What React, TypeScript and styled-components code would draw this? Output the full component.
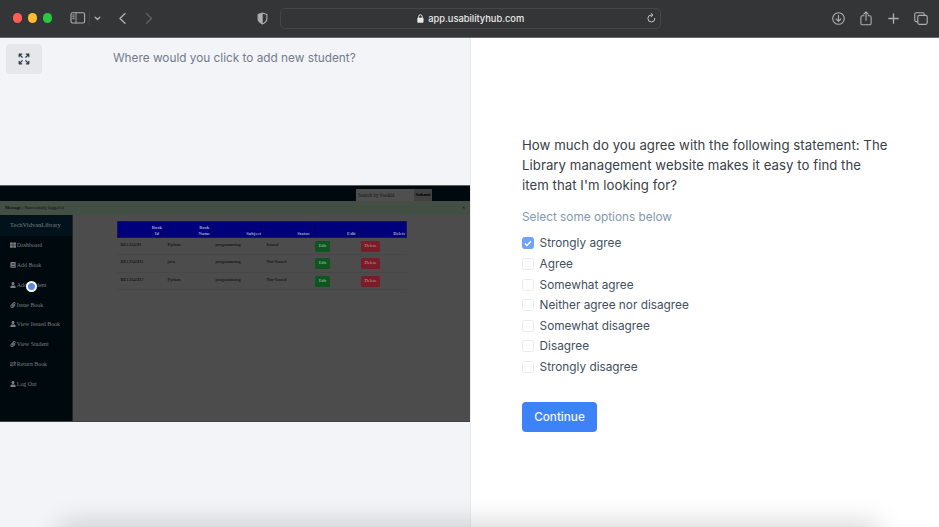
import React from "react";
import styled, { createGlobalStyle, css } from "styled-components";
import { FaBook, FaPaperclip, FaThLarge, FaUser } from "react-icons/fa";

const GlobalStyle = createGlobalStyle`
  * { box-sizing: border-box; }
  body { margin: 0; overflow: hidden; background: #fff; font-family: Inter, "Liberation Sans", sans-serif; }
`;

const Window = styled.div`
  position: relative;
  display: flex;
  flex-direction: column;
  width: 939px;
  height: 527px;
  overflow: hidden;
`;

const BrowserBar = styled.header`
  display: flex;
  align-items: center;
  flex: none;
  height: 38px;
  padding: 0 11px 1px 13px;
  background: #343536;
  border-bottom: 1px solid #646566;
  color: #adaeaf;
  svg { display: block; flex: none; }
`;

const Lights = styled.div`
  display: flex;
  gap: 5.6px;
  margin-right: 18px;
`;

const Light = styled.i<{ $color: string }>`
  width: 9.2px;
  height: 9.2px;
  border-radius: 50%;
  background: ${(p) => p.$color};
`;

const Tools = styled.div`
  display: flex;
  align-items: center;
  width: 200px;
  padding-right: 2px;
`;

const Divider = styled.i`
  width: 1px;
  height: 13px;
  margin: 0 4px 0 3px;
  background: #434445;
`;

const Spacer = styled.span`
  flex: 1;
`;

const Address = styled.div`
  display: flex;
  align-items: center;
  justify-content: center;
  width: 381px;
  height: 21px;
  margin-left: 10px;
  padding: 0 4px 0 14px;
  border: 1px solid #454647;
  border-radius: 5px;
  color: #e9e9e9;
  font-size: 9.3px;
  font-weight: 500;
`;

const Host = styled.span`
  flex: 1;
  display: flex;
  align-items: center;
  justify-content: center;
  gap: 4px;
`;

const Actions = styled.div`
  display: flex;
  align-items: center;
  justify-content: space-between;
  width: 96px;
  margin-left: auto;
`;

const Content = styled.main`
  display: flex;
  flex: 1;
`;

const TaskPane = styled.section`
  display: flex;
  flex-direction: column;
  width: 471px;
  background: #f2f4f8;
  border-right: 1px solid #e8eaec;
`;

const TaskHeader = styled.div`
  display: flex;
  height: 147px;
  padding: 6px 6px 0;
`;

const ExpandButton = styled.button`
  display: flex;
  align-items: center;
  justify-content: center;
  width: 36px;
  height: 30px;
  padding: 0;
  border: 0;
  border-radius: 4px;
  background: #e5e7eb;
  color: #2d3e4f;
`;

const TaskText = styled.p`
  margin: 6px 0 0 71px;
  font-size: 11.8px;
  line-height: 17px;
  white-space: nowrap;
  color: #737b8b;
`;

const Shot = styled.div`
  position: relative;
  width: 470px;
  height: 237px;
  background: #4c4c4c;
  border-top: 1px solid #59605f;
  border-bottom: 1px solid #404040;
  font-family: "Liberation Serif", serif;
  overflow: hidden;
`;

const ShotTop = styled.div`
  display: flex;
  justify-content: flex-end;
  height: 15px;
  padding: 3px 38px 0 0;
  background: #00090e;
`;

const SearchField = styled.span`
  width: 58px;
  height: 12px;
  padding-left: 2px;
  background: #4f4f4f;
  color: #151515;
  font-size: 5.2px;
  line-height: 12px;
`;

const SubmitField = styled.span`
  width: 18px;
  height: 12px;
  background: #414141;
  color: #000;
  font-size: 4.8px;
  font-weight: 700;
  line-height: 12px;
  text-align: center;
`;

const Message = styled.div`
  display: flex;
  justify-content: space-between;
  height: 14px;
  padding: 0 5px 0 5px;
  background: #434e45;
  color: #07120b;
  font-size: 4.4px;
  line-height: 13px;
`;

const ShotBody = styled.div`
  display: flex;
  height: 207px;
`;

const Sidebar = styled.nav`
  width: 73px;
  flex: none;
  background: #00090e;
  border-right: 1px solid #20272a;
  color: #7b7f81;
`;

const Brand = styled.div`
  height: 20.5px;
  padding-left: 10px;
  background: #01121b;
  font-size: 6.5px;
  line-height: 20px;
`;

const NavItem = styled.div`
  display: flex;
  align-items: center;
  gap: 0.5px;
  height: 19.75px;
  padding-left: 10.3px;
  font-size: 5.9px;
  white-space: nowrap;
  svg { width: 6px; height: 6px; flex: none; }
`;

const Table = styled.div`
  width: 290px;
  margin: 6px 0 0 44px;
  font-size: 4.6px;
  color: #060606;
`;

const grid = css`
  display: grid;
  grid-template-columns: 47px 48px 51px 48.5px 46px 49px;
`;

const HeadRow = styled.div`
  ${grid}
  height: 17px;
  background: #00007c;
  border: 1px solid #161650;
  color: #a2a2c4;
  font-weight: 700;
  line-height: 6px;
`;

const HeadCell = styled.span`
  display: flex;
  align-items: flex-end;
  justify-content: flex-end;
  padding: 0 2px 0 0;
  border-right: 1px solid #08085a;
  text-align: center;
  white-space: pre-line;
  &:last-child { border-right: 0; }
`;

const Row = styled.div`
  ${grid}
  height: 17.4px;
  border-bottom: 1px solid #474747;
`;

const Cell = styled.span`
  padding-left: 3.5px;
  line-height: 13px;
`;

const RowButton = styled.span<{ $danger?: boolean }>`
  display: block;
  width: ${(p) => (p.$danger ? "19px" : "15px")};
  height: 11px;
  margin-top: 3px;
  border-radius: 1.5px;
  background: ${(p) => (p.$danger ? "#7a1d28" : "#0f5520")};
  color: ${(p) => (p.$danger ? "#c3a0a4" : "#a9c4ae")};
  line-height: 10.5px;
  text-align: center;
`;

const ClickMarker = styled.i`
  position: absolute;
  left: 25.5px;
  top: 95px;
  width: 11px;
  height: 11px;
  border: 2px solid #fff;
  border-radius: 50%;
  background: #5b8cda;
`;

const QuestionPane = styled.section`
  display: flex;
  flex-direction: column;
  align-items: flex-start;
  flex: 1;
  padding: 97px 0 0 51px;
`;

const Question = styled.h1`
  margin: 0;
  font-size: 13.2px;
  font-weight: 400;
  line-height: 20px;
  letter-spacing: 0.05px;
  white-space: pre;
  color: #394047;
`;

const Hint = styled.p`
  margin: 13.8px 0 7.4px;
  font-size: 11.8px;
  line-height: 17px;
  color: #8398ac;
`;

const Option = styled.label`
  display: flex;
  align-items: center;
  gap: 5.6px;
  height: 20.6px;
  font-size: 11.8px;
  color: #42505e;
`;

const Box = styled.span<{ $checked: boolean }>`
  display: flex;
  align-items: center;
  justify-content: center;
  width: 12px;
  height: 12px;
  border: 1px solid ${(p) => (p.$checked ? "#70a2f8" : "#e7ebf1")};
  border-radius: 2.5px;
  background: ${(p) => (p.$checked ? "#70a2f8" : "#fff")};
`;

const Continue = styled.button`
  width: 75px;
  height: 30px;
  margin-top: 24.6px;
  padding: 0;
  border: 0;
  border-radius: 4px;
  background: #3d82f8;
  color: #f5f9ff;
  font: 500 11.7px Inter, sans-serif;
`;

const BottomShade = styled.div`
  position: absolute;
  left: 62px;
  right: 62px;
  bottom: -20px;
  height: 20px;
  box-shadow: 0 0 28px 2px rgba(0, 0, 0, 0.2);
  pointer-events: none;
`;

type IconProps = { w: number; h: number; children: React.ReactNode; box?: string; stroke?: number };
const Icon = ({ w, h, children, box, stroke = 1.1 }: IconProps) => (
  <svg width={w} height={h} viewBox={box ?? `0 0 ${w} ${h}`} fill="none" stroke="currentColor" strokeWidth={stroke} strokeLinecap="round" strokeLinejoin="round">
    {children}
  </svg>
);

const ReturnArrows = () => (
  <Icon w={6} h={6} box="0 0 12 12" stroke={1.5}>
    <path d="M1 3.8h10M8.8 1.6 11 3.8 8.8 6M11 8.2H1M3.2 6 1 8.2l2.2 2.2" />
  </Icon>
);

const nav = [
  { label: "Dashboard", Glyph: FaThLarge },
  { label: "Add Book", Glyph: FaBook },
  { label: "Add Student", Glyph: FaUser },
  { label: "Issue Book", Glyph: FaPaperclip },
  { label: "View Issued Book", Glyph: FaUser },
  { label: "View Student", Glyph: FaPaperclip },
  { label: "Return Book", Glyph: ReturnArrows },
  { label: "Log Out", Glyph: FaUser },
];

const heads = ["Book\nId", "Book\nName", "Subject", "Status", "Edit", "Delete"];
const books = [
  ["BE12345H", "Python", "programming", "Issued"],
  ["BE12345H1", "java", "programming", "Not-Issued"],
  ["BE12345H2", "Python", "programming", "Not-Issued"],
];
const options = ["Strongly agree", "Agree", "Somewhat agree", "Neither agree nor disagree", "Somewhat disagree", "Disagree", "Strongly disagree"];

export default function App() {
  return (
    <Window>
      <GlobalStyle />
      <BrowserBar>
        <Lights>
          <Light $color="#ff5f57" />
          <Light $color="#febc2e" />
          <Light $color="#28c840" />
        </Lights>
        <Tools>
          <Icon w={16} h={12}>
            <rect x="1" y="0.8" width="13.6" height="10.2" rx="1.6" />
            <path d="M6 .8V11M2.7 3h1.6M2.7 4.8h1.6M2.7 6.6h1.6" strokeWidth=".9" />
          </Icon>
          <Divider />
          <Icon w={7} h={5} stroke={1.4}><path d="m1.2 1.2 2.3 2.2 2.3-2.2" /></Icon>
          <Spacer />
          <Icon w={150} h={13} stroke={1.4}>
            <path d="M7 1.6 1.9 6.4 7 11.2" />
            <path d="m28.5 1.6 5 4.8-5 4.8" stroke="#606162" />
            <path d="m144.5 1 4.4 1.5v4.3c0 2.4-1.8 4-4.4 5.2-2.6-1.2-4.4-2.8-4.4-5.2V2.5Z" strokeWidth="1.1" />
            <path d="m144.7 1-4.4 1.5v4.3c0 2.4 1.8 4 4.4 5.2Z" fill="currentColor" stroke="none" />
          </Icon>
        </Tools>
        <Address>
          <Host>
            <svg width="7" height="9" viewBox="0 0 7 9">
              <rect x=".3" y="3.7" width="6.2" height="5" rx=".9" fill="currentColor" />
              <path d="M1.6 4V2.6a1.8 1.8 0 0 1 3.6 0V4" fill="none" stroke="currentColor" strokeWidth="1" />
            </svg>
            app.usabilityhub.com
          </Host>
          <Icon w={9} h={10} stroke={1}>
            <path d="M7.9 5.5A3.5 3.5 0 1 1 4.5 2h1M4.2.5 5.8 2 4.2 3.7" stroke="#c4c5c6" />
          </Icon>
        </Address>
        <Actions>
          <Icon w={13} h={13}>
            <circle cx="6.5" cy="6.5" r="5.8" />
            <path d="M6.5 3.4v5.8M4.2 7l2.3 2.3L8.8 7" />
          </Icon>
          <Icon w={12} h={15}>
            <path d="M4 4.8H2.3A1.4 1.4 0 0 0 .9 6.2v6.2a1.4 1.4 0 0 0 1.4 1.4h7.4a1.4 1.4 0 0 0 1.4-1.4V6.2a1.4 1.4 0 0 0-1.4-1.4H8M6 9.2V1M3.8 3.1 6 .9l2.2 2.2" />
          </Icon>
          <Icon w={11} h={11} stroke={1.3}><path d="M5.5.8v9.4M.8 5.5h9.4" /></Icon>
          <Icon w={14} h={13}>
            <rect x="3.8" y="3.4" width="9.4" height="9" rx="1.6" />
            <path d="M3.8 9.6H2.2A1.4 1.4 0 0 1 .8 8.2V2.1A1.4 1.4 0 0 1 2.2.7h6.6a1.4 1.4 0 0 1 1.4 1.4v1.3" />
          </Icon>
        </Actions>
      </BrowserBar>
      <Content>
        <TaskPane>
          <TaskHeader>
            <ExpandButton aria-label="Expand">
              <Icon w={12} h={12} stroke={1.25}>
                <path d="M1.2 3.7V1.2h2.5M1.4 1.4l2.8 2.8M8.3 1.2h2.5v2.5M10.6 1.4 7.8 4.2M1.2 8.3v2.5h2.5M1.4 10.6l2.8-2.8M8.3 10.8h2.5V8.3M10.6 10.6 7.8 7.8" />
              </Icon>
            </ExpandButton>
            <TaskText>Where would you click to add new student?</TaskText>
          </TaskHeader>
          <Shot>
            <ShotTop>
              <SearchField>Search by bookid</SearchField>
              <SubmitField>Submit</SubmitField>
            </ShotTop>
            <Message>
              <span><b>Message :</b> Successfully logged in</span>
              <span>✕</span>
            </Message>
            <ShotBody>
              <Sidebar>
                <Brand>TechVidvanLibrary</Brand>
                {nav.map(({ label, Glyph }) => (
                  <NavItem key={label}><Glyph />{label}</NavItem>
                ))}
              </Sidebar>
              <Table>
                <HeadRow>{heads.map((h) => <HeadCell key={h}>{h}</HeadCell>)}</HeadRow>
                {books.map((book) => (
                  <Row key={book[0]}>
                    {book.map((value) => <Cell key={value}>{value}</Cell>)}
                    <Cell><RowButton>Edit</RowButton></Cell>
                    <Cell><RowButton $danger>Delete</RowButton></Cell>
                  </Row>
                ))}
              </Table>
            </ShotBody>
            <ClickMarker />
          </Shot>
        </TaskPane>
        <QuestionPane>
          <Question>{"How much do you agree with the following statement: The\nLibrary management website makes it easy to find the\nitem that I'm looking for?"}</Question>
          <Hint>Select some options below</Hint>
          {options.map((label, i) => (
            <Option key={label}>
              <Box $checked={i === 0}>
                {i === 0 && <svg width="8" height="7" viewBox="0 0 8 7"><path d="m.9 3.5 2 2L7 1.2" fill="none" stroke="#fff" strokeWidth="1.4" /></svg>}
              </Box>
              {label}
            </Option>
          ))}
          <Continue>Continue</Continue>
        </QuestionPane>
      </Content>
      <BottomShade />
    </Window>
  );
}
